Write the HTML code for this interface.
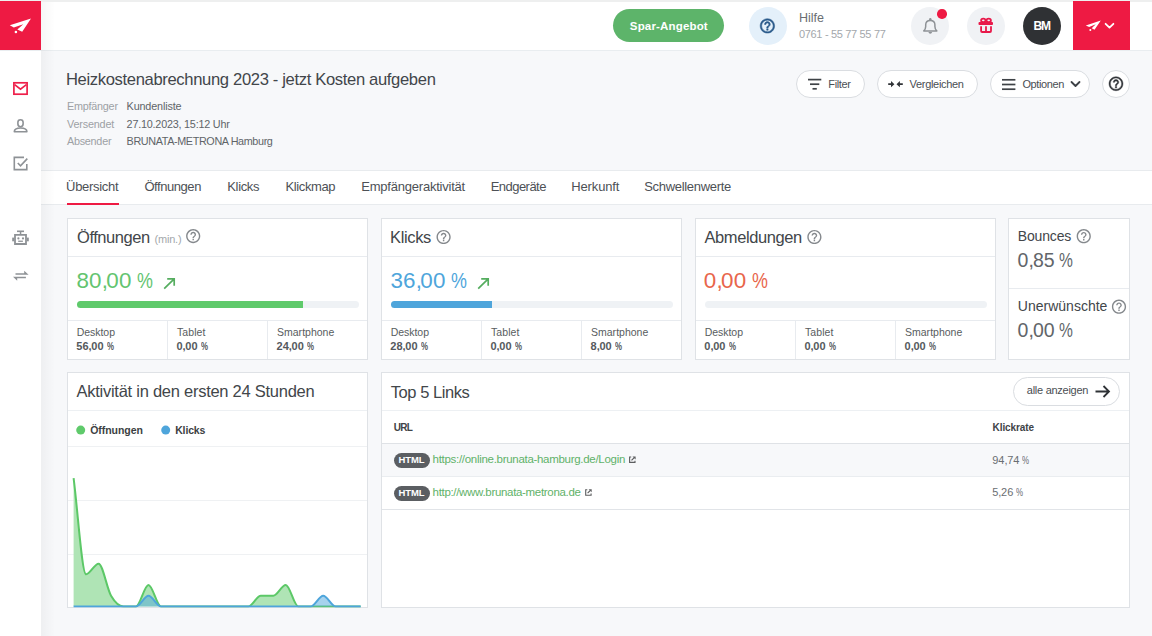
<!DOCTYPE html>
<html><head><meta charset='utf-8'><style>
html,body{margin:0;padding:0;width:1152px;height:636px;overflow:hidden;background:#f7f8fa;font-family:"Liberation Sans", sans-serif;}
.b{position:absolute;}
.t{position:absolute;white-space:nowrap;line-height:1.117;}
.ov{position:absolute;left:0;top:0;}
</style></head><body>
<div class=b style='left:0px;top:0px;width:1152px;height:2px;background:#eeefef'></div><div class=b style='left:0px;top:2px;width:1152px;height:48px;background:#fff'></div><div class=b style='left:0px;top:50px;width:1152px;height:1px;background:#e9edf0'></div><div class=b style='left:41px;top:51px;width:1111px;height:585px;background:#f7f8fa'></div><div class=b style='left:0px;top:51px;width:41px;height:585px;background:#fff'></div><div class=b style='left:0px;top:1.4px;width:41px;height:48.6px;background:#ee1a43'></div><div class=b style='left:41px;top:170px;width:1111px;height:35px;background:#fff;border-top:1px solid #e8ebee;border-bottom:1px solid #e8ebee;box-sizing:border-box'></div><div class=b style='left:67px;top:203px;width:52px;height:2px;background:#ee1a43'></div><div class=b style='left:613px;top:9px;width:111px;height:33px;background:#5db46a;border-radius:17px'></div><div class=b style='left:749px;top:7px;width:38px;height:38px;background:#e4f0fa;border-radius:50%'></div><div class=b style='left:911px;top:7px;width:38px;height:38px;background:#f0f2f5;border-radius:50%'></div><div class=b style='left:937px;top:9px;width:9.5px;height:9.5px;background:#ee1a43;border-radius:50%'></div><div class=b style='left:967px;top:7px;width:38px;height:38px;background:#f0f2f5;border-radius:50%'></div><div class=b style='left:1023px;top:7px;width:38px;height:38px;background:#2f3134;border-radius:50%'></div><div class=b style='left:1073px;top:1.3px;width:57px;height:48.7px;background:#ee1a43'></div><div class=b style='left:796px;top:70px;width:69px;height:28px;background:#fff;border:1px solid #dadde1;border-radius:14px;box-sizing:border-box'></div><div class=b style='left:877px;top:70px;width:101px;height:28px;background:#fff;border:1px solid #dadde1;border-radius:14px;box-sizing:border-box'></div><div class=b style='left:990px;top:70px;width:100px;height:28px;background:#fff;border:1px solid #dadde1;border-radius:14px;box-sizing:border-box'></div><div class=b style='left:1102px;top:70px;width:28px;height:28px;background:#fff;border:1px solid #dadde1;border-radius:50%;box-sizing:border-box'></div><div class=b style='left:67px;top:218px;width:301px;height:142px;background:#fff;border:1px solid #dfe2e6;box-sizing:border-box'></div><div class=b style='left:68px;top:256px;width:299px;height:1px;background:#e8ebef'></div><div class=b style='left:68px;top:320px;width:299px;height:1px;background:#e8ebef'></div><div class=b style='left:167px;top:321px;width:1px;height:38px;background:#e8ebef'></div><div class=b style='left:267px;top:321px;width:1px;height:38px;background:#e8ebef'></div><div class=b style='left:76.5px;top:301px;width:282px;height:7px;background:#eff2f5;border-radius:4px'></div><div class=b style='left:381px;top:218px;width:301px;height:142px;background:#fff;border:1px solid #dfe2e6;box-sizing:border-box'></div><div class=b style='left:382px;top:256px;width:299px;height:1px;background:#e8ebef'></div><div class=b style='left:382px;top:320px;width:299px;height:1px;background:#e8ebef'></div><div class=b style='left:481px;top:321px;width:1px;height:38px;background:#e8ebef'></div><div class=b style='left:581px;top:321px;width:1px;height:38px;background:#e8ebef'></div><div class=b style='left:390.5px;top:301px;width:282px;height:7px;background:#eff2f5;border-radius:4px'></div><div class=b style='left:695px;top:218px;width:301px;height:142px;background:#fff;border:1px solid #dfe2e6;box-sizing:border-box'></div><div class=b style='left:696px;top:256px;width:299px;height:1px;background:#e8ebef'></div><div class=b style='left:696px;top:320px;width:299px;height:1px;background:#e8ebef'></div><div class=b style='left:795px;top:321px;width:1px;height:38px;background:#e8ebef'></div><div class=b style='left:895px;top:321px;width:1px;height:38px;background:#e8ebef'></div><div class=b style='left:704.5px;top:301px;width:282px;height:7px;background:#eff2f5;border-radius:4px'></div><div class=b style='left:76.5px;top:301px;width:226px;height:7px;background:#5fca6b;border-radius:4px 0 0 4px'></div><div class=b style='left:390.5px;top:301px;width:101.5px;height:7px;background:#4ea5db;border-radius:4px 0 0 4px'></div><div class=b style='left:1008px;top:218px;width:122px;height:142px;background:#fff;border:1px solid #dfe2e6;box-sizing:border-box'></div><div class=b style='left:1009px;top:288px;width:120px;height:1px;background:#e8ebef'></div><div class=b style='left:67px;top:372px;width:301px;height:236px;background:#fff;border:1px solid #dfe2e6;box-sizing:border-box'></div><div class=b style='left:68px;top:410px;width:299px;height:1px;background:#edf0f3'></div><div class=b style='left:381px;top:372px;width:749px;height:236px;background:#fff;border:1px solid #dfe2e6;box-sizing:border-box'></div><div class=b style='left:382px;top:410px;width:747px;height:1px;background:#edf0f3'></div><div class=b style='left:382px;top:443px;width:747px;height:1px;background:#dfe2e6'></div><div class=b style='left:382px;top:444px;width:747px;height:32px;background:#f7f8fa'></div><div class=b style='left:382px;top:476px;width:747px;height:1px;background:#eaedf0'></div><div class=b style='left:382px;top:509px;width:747px;height:1px;background:#e1e4e8'></div><div class=b style='left:1013px;top:377px;width:107px;height:29px;background:#fff;border:1px solid #dadde1;border-radius:14.5px;box-sizing:border-box'></div><div class=b style='left:393.5px;top:453px;width:36px;height:14.5px;background:#5b5e62;border-radius:7.5px'></div><div class=b style='left:393.5px;top:486px;width:36px;height:14.5px;background:#5b5e62;border-radius:7.5px'></div><div class=b style='left:41px;top:2px;width:14px;height:634px;background:linear-gradient(90deg,rgba(0,0,0,0.035),rgba(0,0,0,0))'></div>
<svg class=ov width='1152' height='636' viewBox='0 0 1152 636'>
<clipPath id=cc><rect x='68' y='440' width='299' height='167.5'/></clipPath>
<g stroke='#eff1f3' stroke-width='1'>
<line x1='68' y1='446.5' x2='367' y2='446.5'/><line x1='68' y1='500.5' x2='367' y2='500.5'/><line x1='68' y1='554.5' x2='367' y2='554.5'/>
</g>
<g clip-path='url(#cc)'>
<path d='M73.60 478.12 C77.76 510.19 81.92 574.33 86.08 574.33 C90.24 574.33 94.40 563.64 98.56 563.64 C102.72 563.64 106.88 588.58 111.04 595.71 C115.20 602.84 119.36 606.40 123.52 606.40 C127.68 606.40 131.84 606.40 136.00 606.40 C140.16 606.40 144.32 585.02 148.48 585.02 C152.64 585.02 156.80 606.40 160.96 606.40 C165.12 606.40 169.28 606.40 173.44 606.40 C177.60 606.40 181.76 606.40 185.92 606.40 C190.08 606.40 194.24 606.40 198.40 606.40 C202.56 606.40 206.72 606.40 210.88 606.40 C215.04 606.40 219.20 606.40 223.36 606.40 C227.52 606.40 231.68 606.40 235.84 606.40 C240.00 606.40 244.16 606.40 248.32 606.40 C252.48 606.40 256.64 595.71 260.80 595.71 C264.96 595.71 269.12 595.71 273.28 595.71 C277.44 595.71 281.60 585.02 285.76 585.02 C289.92 585.02 294.08 606.40 298.24 606.40 C302.40 606.40 306.56 606.40 310.72 606.40 C314.88 606.40 319.04 606.40 323.20 606.40 C327.36 606.40 331.52 606.40 335.68 606.40 C339.84 606.40 344.00 606.40 348.16 606.40 C352.32 606.40 356.48 606.40 360.64 606.40 L360.64 606.4 L73.6 606.4 Z' fill='#afe4b5'/>
<path d='M73.60 478.12 C77.76 510.19 81.92 574.33 86.08 574.33 C90.24 574.33 94.40 563.64 98.56 563.64 C102.72 563.64 106.88 588.58 111.04 595.71 C115.20 602.84 119.36 606.40 123.52 606.40 C127.68 606.40 131.84 606.40 136.00 606.40 C140.16 606.40 144.32 585.02 148.48 585.02 C152.64 585.02 156.80 606.40 160.96 606.40 C165.12 606.40 169.28 606.40 173.44 606.40 C177.60 606.40 181.76 606.40 185.92 606.40 C190.08 606.40 194.24 606.40 198.40 606.40 C202.56 606.40 206.72 606.40 210.88 606.40 C215.04 606.40 219.20 606.40 223.36 606.40 C227.52 606.40 231.68 606.40 235.84 606.40 C240.00 606.40 244.16 606.40 248.32 606.40 C252.48 606.40 256.64 595.71 260.80 595.71 C264.96 595.71 269.12 595.71 273.28 595.71 C277.44 595.71 281.60 585.02 285.76 585.02 C289.92 585.02 294.08 606.40 298.24 606.40 C302.40 606.40 306.56 606.40 310.72 606.40 C314.88 606.40 319.04 606.40 323.20 606.40 C327.36 606.40 331.52 606.40 335.68 606.40 C339.84 606.40 344.00 606.40 348.16 606.40 C352.32 606.40 356.48 606.40 360.64 606.40' fill='none' stroke='#5cc867' stroke-width='2'/>
<path d='M73.60 606.40 C77.76 606.40 81.92 606.40 86.08 606.40 C90.24 606.40 94.40 606.40 98.56 606.40 C102.72 606.40 106.88 606.40 111.04 606.40 C115.20 606.40 119.36 606.40 123.52 606.40 C127.68 606.40 131.84 606.40 136.00 606.40 C140.16 606.40 144.32 595.71 148.48 595.71 C152.64 595.71 156.80 606.40 160.96 606.40 C165.12 606.40 169.28 606.40 173.44 606.40 C177.60 606.40 181.76 606.40 185.92 606.40 C190.08 606.40 194.24 606.40 198.40 606.40 C202.56 606.40 206.72 606.40 210.88 606.40 C215.04 606.40 219.20 606.40 223.36 606.40 C227.52 606.40 231.68 606.40 235.84 606.40 C240.00 606.40 244.16 606.40 248.32 606.40 C252.48 606.40 256.64 606.40 260.80 606.40 C264.96 606.40 269.12 606.40 273.28 606.40 C277.44 606.40 281.60 606.40 285.76 606.40 C289.92 606.40 294.08 606.40 298.24 606.40 C302.40 606.40 306.56 606.40 310.72 606.40 C314.88 606.40 319.04 595.71 323.20 595.71 C327.36 595.71 331.52 606.40 335.68 606.40 C339.84 606.40 344.00 606.40 348.16 606.40 C352.32 606.40 356.48 606.40 360.64 606.40 L360.64 606.4 L73.6 606.4 Z' fill='rgba(78,165,219,0.5)'/>
<path d='M73.60 606.40 C77.76 606.40 81.92 606.40 86.08 606.40 C90.24 606.40 94.40 606.40 98.56 606.40 C102.72 606.40 106.88 606.40 111.04 606.40 C115.20 606.40 119.36 606.40 123.52 606.40 C127.68 606.40 131.84 606.40 136.00 606.40 C140.16 606.40 144.32 595.71 148.48 595.71 C152.64 595.71 156.80 606.40 160.96 606.40 C165.12 606.40 169.28 606.40 173.44 606.40 C177.60 606.40 181.76 606.40 185.92 606.40 C190.08 606.40 194.24 606.40 198.40 606.40 C202.56 606.40 206.72 606.40 210.88 606.40 C215.04 606.40 219.20 606.40 223.36 606.40 C227.52 606.40 231.68 606.40 235.84 606.40 C240.00 606.40 244.16 606.40 248.32 606.40 C252.48 606.40 256.64 606.40 260.80 606.40 C264.96 606.40 269.12 606.40 273.28 606.40 C277.44 606.40 281.60 606.40 285.76 606.40 C289.92 606.40 294.08 606.40 298.24 606.40 C302.40 606.40 306.56 606.40 310.72 606.40 C314.88 606.40 319.04 595.71 323.20 595.71 C327.36 595.71 331.52 606.40 335.68 606.40 C339.84 606.40 344.00 606.40 348.16 606.40 C352.32 606.40 356.48 606.40 360.64 606.40' fill='none' stroke='#4ea5db' stroke-width='2'/>
</g>
<circle cx='80.7' cy='430.1' r='4.5' fill='#5fca6b'/>
<circle cx='165.7' cy='430.1' r='4.5' fill='#4ea5db'/>
<path d='M9.8 25.2 L31 18.6 L22.2 31.8 L17.3 29.4 L23.3 24.2 L13.8 27.6 Z' fill='#fff'/><circle cx='15.9' cy='32' r='1.3' fill='#fff'/><path d='M1085.8 25.4 L1100.8 20.4 L1094.5 29.8 L1091.7 28.2 L1095.8 24.2 L1089.2 26.9 Z' fill='#fff'/><circle cx='1090.3' cy='29.9' r='1' fill='#fff'/><path d='M1105.6 23.8 L1109.5 27.6 L1113.4 23.8' fill='none' stroke='#fff' stroke-width='1.8' stroke-linecap='round' stroke-linejoin='round'/><path transform='translate(758.760 17.260) scale(0.7200)' stroke='#29598a' stroke-width='0.7' fill='#29598a' d='M11 18h2v-2h-2v2zm1-16C6.48 2 2 6.48 2 12s4.48 10 10 10 10-4.48 10-10S17.52 2 12 2zm0 18c-4.41 0-8-3.59-8-8s3.59-8 8-8 8 3.59 8 8-3.59 8-8 8zm0-14c-2.21 0-4 1.79-4 4h2c0-1.1.9-2 2-2s2 .9 2 2c0 2-3 1.75-3 5h2c0-2.25 3-2.5 3-5 0-2.21-1.79-4-4-4z'/><path d='M923.8 30.9 Q925.7 29.2 925.7 26.6 V24.8 Q925.7 20.4 930.3 20.4 Q934.9 20.4 934.9 24.8 V26.6 Q934.9 29.2 936.8 30.9 Z' fill='none' stroke='#8e9296' stroke-width='1.5' stroke-linejoin='round'/><circle cx='930.3' cy='19.3' r='1.2' fill='#8e9296'/><path d='M928.4 32.1 H932.2 Q931.8 33.8 930.3 33.8 Q928.8 33.8 928.4 32.1 Z' fill='#8e9296'/><g fill='none' stroke='#e8194a' stroke-width='1.8'><ellipse cx='983.3' cy='20.4' rx='2.2' ry='1.7'/><ellipse cx='988.7' cy='20.4' rx='2.2' ry='1.7'/><path d='M981.1 26.2 V31 Q981.1 32 982.1 32 H990 Q991 32 991 31 V26.2 M986 26.2 V32'/></g><rect x='978.5' y='22' width='14.5' height='3' rx='0.9' fill='#e8194a'/><g stroke='#3e4246' stroke-width='1.7'><line x1='808' y1='79.6' x2='821.3' y2='79.6'/><line x1='810' y1='84.2' x2='819.3' y2='84.2'/><line x1='812.5' y1='88.8' x2='816.8' y2='88.8'/></g><g fill='#303337'><path d='M888.2 83.3 H891.5 V85.1 H888.2 Z M891 81.1 L894.4 84.2 L891 87.3 Z M902.8 83.3 H899.5 V85.1 H902.8 Z M899.9 81.1 L896.5 84.2 L899.9 87.3 Z'/></g><g stroke='#3e4246' stroke-width='1.7'><line x1='1002' y1='79.8' x2='1015.4' y2='79.8'/><line x1='1002' y1='84.5' x2='1015.4' y2='84.5'/><line x1='1002' y1='89.2' x2='1015.4' y2='89.2'/></g><path d='M1071.5 82 L1075.5 86 L1079.5 82' fill='none' stroke='#3e4246' stroke-width='1.8' stroke-linecap='round' stroke-linejoin='round'/><path transform='translate(1107.600 75.300) scale(0.7000)' stroke='#303337' stroke-width='0.6' fill='#303337' d='M11 18h2v-2h-2v2zm1-16C6.48 2 2 6.48 2 12s4.48 10 10 10 10-4.48 10-10S17.52 2 12 2zm0 18c-4.41 0-8-3.59-8-8s3.59-8 8-8 8 3.59 8 8-3.59 8-8 8zm0-14c-2.21 0-4 1.79-4 4h2c0-1.1.9-2 2-2s2 .9 2 2c0 2-3 1.75-3 5h2c0-2.25 3-2.5 3-5 0-2.21-1.79-4-4-4z'/><path transform='translate(184.680 227.580) scale(0.7100)' fill='#85898d' d='M11 18h2v-2h-2v2zm1-16C6.48 2 2 6.48 2 12s4.48 10 10 10 10-4.48 10-10S17.52 2 12 2zm0 18c-4.41 0-8-3.59-8-8s3.59-8 8-8 8 3.59 8 8-3.59 8-8 8zm0-14c-2.21 0-4 1.79-4 4h2c0-1.1.9-2 2-2s2 .9 2 2c0 2-3 1.75-3 5h2c0-2.25 3-2.5 3-5 0-2.21-1.79-4-4-4z'/><path transform='translate(435.080 228.480) scale(0.7100)' fill='#85898d' d='M11 18h2v-2h-2v2zm1-16C6.48 2 2 6.48 2 12s4.48 10 10 10 10-4.48 10-10S17.52 2 12 2zm0 18c-4.41 0-8-3.59-8-8s3.59-8 8-8 8 3.59 8 8-3.59 8-8 8zm0-14c-2.21 0-4 1.79-4 4h2c0-1.1.9-2 2-2s2 .9 2 2c0 2-3 1.75-3 5h2c0-2.25 3-2.5 3-5 0-2.21-1.79-4-4-4z'/><path transform='translate(805.880 228.480) scale(0.7100)' fill='#85898d' d='M11 18h2v-2h-2v2zm1-16C6.48 2 2 6.48 2 12s4.48 10 10 10 10-4.48 10-10S17.52 2 12 2zm0 18c-4.41 0-8-3.59-8-8s3.59-8 8-8 8 3.59 8 8-3.59 8-8 8zm0-14c-2.21 0-4 1.79-4 4h2c0-1.1.9-2 2-2s2 .9 2 2c0 2-3 1.75-3 5h2c0-2.25 3-2.5 3-5 0-2.21-1.79-4-4-4z'/><path transform='translate(1075.230 227.680) scale(0.7100)' fill='#85898d' d='M11 18h2v-2h-2v2zm1-16C6.48 2 2 6.48 2 12s4.48 10 10 10 10-4.48 10-10S17.52 2 12 2zm0 18c-4.41 0-8-3.59-8-8s3.59-8 8-8 8 3.59 8 8-3.59 8-8 8zm0-14c-2.21 0-4 1.79-4 4h2c0-1.1.9-2 2-2s2 .9 2 2c0 2-3 1.75-3 5h2c0-2.25 3-2.5 3-5 0-2.21-1.79-4-4-4z'/><path transform='translate(1110.480 298.180) scale(0.7100)' fill='#85898d' d='M11 18h2v-2h-2v2zm1-16C6.48 2 2 6.48 2 12s4.48 10 10 10 10-4.48 10-10S17.52 2 12 2zm0 18c-4.41 0-8-3.59-8-8s3.59-8 8-8 8 3.59 8 8-3.59 8-8 8zm0-14c-2.21 0-4 1.79-4 4h2c0-1.1.9-2 2-2s2 .9 2 2c0 2-3 1.75-3 5h2c0-2.25 3-2.5 3-5 0-2.21-1.79-4-4-4z'/><path d='M164.2 288.6 L174.2 278.8 M167.2 278.8 L174.2 278.8 L174.2 285.8' fill='none' stroke='#55ad5f' stroke-width='1.7'/><path d='M478.2 288.6 L488.2 278.8 M481.2 278.8 L488.2 278.8 L488.2 285.8' fill='none' stroke='#55ad5f' stroke-width='1.7'/><path d='M1095.5 391.5 L1109 391.5 M1103.5 386 L1109 391.5 L1103.5 397' fill='none' stroke='#2f3236' stroke-width='1.8'/><path d='M631.20 457.00 H629.60 V462.40 H635.00 V460.70' fill='none' stroke='#5c5d5f' stroke-width='1.1'/><path d='M631.50 460.40 L634.30 457.60' stroke='#5c5d5f' stroke-width='1.2'/><path d='M632.50 456.40 H635.60 V459.50 Z' fill='#5c5d5f'/><path d='M587.30 489.80 H585.70 V495.20 H591.10 V493.50' fill='none' stroke='#5c5d5f' stroke-width='1.1'/><path d='M587.60 493.20 L590.40 490.40' stroke='#5c5d5f' stroke-width='1.2'/><path d='M588.60 489.20 H591.70 V492.30 Z' fill='#5c5d5f'/><rect x='13.9' y='82.8' width='13.2' height='11.4' fill='none' stroke='#ee1f4a' stroke-width='1.7'/><path d='M14.6 84.6 L20.5 89.2 L26.4 84.6' fill='none' stroke='#ee1f4a' stroke-width='1.7'/><rect x='17.9' y='119.7' width='5.2' height='7' rx='2.6' fill='none' stroke='#8e9296' stroke-width='1.6'/><path d='M14.3 131.7 Q14.3 128 20.6 128 Q26.9 128 26.9 131.7 Z' fill='none' stroke='#8e9296' stroke-width='1.6' stroke-linejoin='round'/><path d='M24 157.4 L14.3 157.4 L14.3 169.6 L26.8 169.6 L26.8 164' fill='none' stroke='#8e9296' stroke-width='1.6'/><path d='M17.8 163 L20.5 165.8 L27.3 158.6' fill='none' stroke='#8e9296' stroke-width='1.6'/><g fill='#8e9296'><rect x='17' y='230.5' width='7' height='1.6'/><rect x='19.8' y='231.5' width='1.5' height='2.8'/><path d='M14.1 234 H26.9 V244.9 H14.1 Z M15.9 235.8 V243.1 H25.1 V235.8 Z' fill-rule='evenodd'/><rect x='12.2' y='237.6' width='1.9' height='3.7'/><rect x='26.9' y='237.6' width='1.9' height='3.7'/><circle cx='18.4' cy='238.4' r='1.1'/><circle cx='23' cy='238.4' r='1.1'/><rect x='18.2' y='240.6' width='4.7' height='1.3'/></g><g fill='#8e9296'><path d='M15.5 273.3 H24.2 V270.7 L28.6 274.8 H15.5 Z'/><path d='M25.9 276.7 H13 L17.2 280.7 V278.2 H25.9 Z'/></g></svg>
<div class=t style='left:629.80px;top:19.59px;font-size:11.5px;color:#fff;font-weight:700;letter-spacing:0.170px;'>Spar-Angebot</div>
<div class=t style='left:799.00px;top:12.19px;font-size:12.5px;color:#6a6e72;font-weight:400;letter-spacing:-0.004px;'>Hilfe</div>
<div class=t style='left:799.00px;top:28.25px;font-size:11px;color:#a3a7ab;font-weight:400;letter-spacing:-0.327px;'>0761 - 55 77 55 77</div>
<div class=t style='left:1033.50px;top:19.54px;font-size:12px;color:#fff;font-weight:700;letter-spacing:-1.072px;'>BM</div>
<div class=t style='left:65.90px;top:70.98px;font-size:16.6px;color:#42464a;font-weight:400;letter-spacing:-0.345px;'>Heizkostenabrechnung 2023 - jetzt Kosten aufgeben</div>
<div class=t style='left:67.00px;top:100.23px;font-size:10.8px;color:#9da1a5;font-weight:400;letter-spacing:-0.229px;'>Empfänger</div>
<div class=t style='left:126.60px;top:100.23px;font-size:10.8px;color:#606468;font-weight:400;letter-spacing:-0.144px;'>Kundenliste</div>
<div class=t style='left:67.00px;top:117.73px;font-size:10.8px;color:#9da1a5;font-weight:400;letter-spacing:-0.166px;'>Versendet</div>
<div class=t style='left:126.60px;top:117.73px;font-size:10.8px;color:#606468;font-weight:400;letter-spacing:-0.213px;'>27.10.2023, 15:12 Uhr</div>
<div class=t style='left:67.00px;top:135.13px;font-size:10.8px;color:#9da1a5;font-weight:400;letter-spacing:-0.248px;'>Absender</div>
<div class=t style='left:126.60px;top:135.13px;font-size:10.8px;color:#606468;font-weight:400;letter-spacing:-0.368px;'>BRUNATA-METRONA Hamburg</div>
<div class=t style='left:828.30px;top:77.64px;font-size:11px;color:#4a4e53;font-weight:400;letter-spacing:-0.351px;'>Filter</div>
<div class=t style='left:909.60px;top:77.64px;font-size:11px;color:#4a4e53;font-weight:400;letter-spacing:-0.310px;'>Vergleichen</div>
<div class=t style='left:1022.40px;top:77.64px;font-size:11px;color:#4a4e53;font-weight:400;letter-spacing:-0.394px;'>Optionen</div>
<div class=t style='left:66.10px;top:180.04px;font-size:13px;color:#4d5156;font-weight:400;letter-spacing:-0.303px;'>Übersicht</div>
<div class=t style='left:144.40px;top:180.04px;font-size:13px;color:#4d5156;font-weight:400;letter-spacing:-0.436px;'>Öffnungen</div>
<div class=t style='left:227.30px;top:180.04px;font-size:13px;color:#4d5156;font-weight:400;letter-spacing:-0.351px;'>Klicks</div>
<div class=t style='left:285.40px;top:180.04px;font-size:13px;color:#4d5156;font-weight:400;letter-spacing:-0.364px;'>Klickmap</div>
<div class=t style='left:361.30px;top:180.04px;font-size:13px;color:#4d5156;font-weight:400;letter-spacing:-0.222px;'>Empfängeraktivität</div>
<div class=t style='left:490.70px;top:180.04px;font-size:13px;color:#4d5156;font-weight:400;letter-spacing:-0.537px;'>Endgeräte</div>
<div class=t style='left:571.30px;top:180.04px;font-size:13px;color:#4d5156;font-weight:400;letter-spacing:-0.149px;'>Herkunft</div>
<div class=t style='left:644.20px;top:180.04px;font-size:13px;color:#4d5156;font-weight:400;letter-spacing:-0.304px;'>Schwellenwerte</div>
<div class=t style='left:77.00px;top:227.67px;font-size:16.5px;color:#42464a;font-weight:400;letter-spacing:-0.446px;'>Öffnungen</div>
<div class=t style='left:154.50px;top:232.64px;font-size:11px;color:#a3a7ab;font-weight:400;letter-spacing:-0.202px;'>(min.)</div>
<div class=t style='left:390.00px;top:227.87px;font-size:16.5px;color:#42464a;font-weight:400;letter-spacing:-0.359px;'>Klicks</div>
<div class=t style='left:704.50px;top:227.87px;font-size:16.5px;color:#42464a;font-weight:400;letter-spacing:-0.423px;'>Abmeldungen</div>
<div class=t style='left:76.40px;top:268.33px;font-size:22.4px;color:#63c46f;font-weight:400;letter-spacing:0.000px;letter-spacing:0.25px'>80<span style='letter-spacing:-1.79px'>,</span>00<span style='letter-spacing:-0.45px'> </span><span style='display:inline-block;transform:scaleX(0.8);transform-origin:0 0'>%</span></div>
<div class=t style='left:390.40px;top:268.33px;font-size:22.4px;color:#4ea5db;font-weight:400;letter-spacing:0.000px;letter-spacing:0.25px'>36<span style='letter-spacing:-1.79px'>,</span>00<span style='letter-spacing:-0.45px'> </span><span style='display:inline-block;transform:scaleX(0.8);transform-origin:0 0'>%</span></div>
<div class=t style='left:703.80px;top:268.33px;font-size:22.4px;color:#e8654b;font-weight:400;letter-spacing:0.000px;letter-spacing:0.25px'>0<span style='letter-spacing:-1.79px'>,</span>00<span style='letter-spacing:-0.45px'> </span><span style='display:inline-block;transform:scaleX(0.8);transform-origin:0 0'>%</span></div>
<div class=t style='left:76.80px;top:327.00px;font-size:10.5px;color:#585c60;font-weight:400;letter-spacing:-0.055px;'>Desktop</div>
<div class=t style='left:76.36px;top:340.05px;font-size:11px;color:#55595d;font-weight:700;letter-spacing:0.000px;letter-spacing:0px'>56<span style='letter-spacing:-0.33px'>,</span>00<span style='letter-spacing:0.00px'> </span><span style='display:inline-block;transform:scaleX(0.72);transform-origin:0 0'>%</span></div>
<div class=t style='left:176.90px;top:327.00px;font-size:10.5px;color:#585c60;font-weight:400;letter-spacing:0.114px;'>Tablet</div>
<div class=t style='left:176.46px;top:340.05px;font-size:11px;color:#55595d;font-weight:700;letter-spacing:0.000px;letter-spacing:0px'>0<span style='letter-spacing:-0.33px'>,</span>00<span style='letter-spacing:0.00px'> </span><span style='display:inline-block;transform:scaleX(0.72);transform-origin:0 0'>%</span></div>
<div class=t style='left:277.00px;top:327.00px;font-size:10.5px;color:#585c60;font-weight:400;letter-spacing:0.011px;'>Smartphone</div>
<div class=t style='left:276.56px;top:340.05px;font-size:11px;color:#55595d;font-weight:700;letter-spacing:0.000px;letter-spacing:0px'>24<span style='letter-spacing:-0.33px'>,</span>00<span style='letter-spacing:0.00px'> </span><span style='display:inline-block;transform:scaleX(0.72);transform-origin:0 0'>%</span></div>
<div class=t style='left:390.80px;top:327.00px;font-size:10.5px;color:#585c60;font-weight:400;letter-spacing:-0.055px;'>Desktop</div>
<div class=t style='left:390.36px;top:340.05px;font-size:11px;color:#55595d;font-weight:700;letter-spacing:0.000px;letter-spacing:0px'>28<span style='letter-spacing:-0.33px'>,</span>00<span style='letter-spacing:0.00px'> </span><span style='display:inline-block;transform:scaleX(0.72);transform-origin:0 0'>%</span></div>
<div class=t style='left:490.90px;top:327.00px;font-size:10.5px;color:#585c60;font-weight:400;letter-spacing:0.114px;'>Tablet</div>
<div class=t style='left:490.46px;top:340.05px;font-size:11px;color:#55595d;font-weight:700;letter-spacing:0.000px;letter-spacing:0px'>0<span style='letter-spacing:-0.33px'>,</span>00<span style='letter-spacing:0.00px'> </span><span style='display:inline-block;transform:scaleX(0.72);transform-origin:0 0'>%</span></div>
<div class=t style='left:591.00px;top:327.00px;font-size:10.5px;color:#585c60;font-weight:400;letter-spacing:0.011px;'>Smartphone</div>
<div class=t style='left:590.56px;top:340.05px;font-size:11px;color:#55595d;font-weight:700;letter-spacing:0.000px;letter-spacing:0px'>8<span style='letter-spacing:-0.33px'>,</span>00<span style='letter-spacing:0.00px'> </span><span style='display:inline-block;transform:scaleX(0.72);transform-origin:0 0'>%</span></div>
<div class=t style='left:704.80px;top:327.00px;font-size:10.5px;color:#585c60;font-weight:400;letter-spacing:-0.055px;'>Desktop</div>
<div class=t style='left:704.36px;top:340.05px;font-size:11px;color:#55595d;font-weight:700;letter-spacing:0.000px;letter-spacing:0px'>0<span style='letter-spacing:-0.33px'>,</span>00<span style='letter-spacing:0.00px'> </span><span style='display:inline-block;transform:scaleX(0.72);transform-origin:0 0'>%</span></div>
<div class=t style='left:804.90px;top:327.00px;font-size:10.5px;color:#585c60;font-weight:400;letter-spacing:0.114px;'>Tablet</div>
<div class=t style='left:804.46px;top:340.05px;font-size:11px;color:#55595d;font-weight:700;letter-spacing:0.000px;letter-spacing:0px'>0<span style='letter-spacing:-0.33px'>,</span>00<span style='letter-spacing:0.00px'> </span><span style='display:inline-block;transform:scaleX(0.72);transform-origin:0 0'>%</span></div>
<div class=t style='left:905.00px;top:327.00px;font-size:10.5px;color:#585c60;font-weight:400;letter-spacing:0.011px;'>Smartphone</div>
<div class=t style='left:904.56px;top:340.05px;font-size:11px;color:#55595d;font-weight:700;letter-spacing:0.000px;letter-spacing:0px'>0<span style='letter-spacing:-0.33px'>,</span>00<span style='letter-spacing:0.00px'> </span><span style='display:inline-block;transform:scaleX(0.72);transform-origin:0 0'>%</span></div>
<div class=t style='left:1017.80px;top:228.93px;font-size:14px;color:#42464a;font-weight:400;letter-spacing:-0.164px;'>Bounces</div>
<div class=t style='left:1017.52px;top:249.75px;font-size:19.5px;color:#62666a;font-weight:400;letter-spacing:0.000px;letter-spacing:0px'>0<span style='letter-spacing:-0.78px'>,</span>85<span style='letter-spacing:-0.88px'> </span><span style='display:inline-block;transform:scaleX(0.8);transform-origin:0 0'>%</span></div>
<div class=t style='left:1017.80px;top:299.13px;font-size:14px;color:#42464a;font-weight:400;letter-spacing:0.009px;'>Unerwünschte</div>
<div class=t style='left:1017.52px;top:319.95px;font-size:19.5px;color:#62666a;font-weight:400;letter-spacing:0.000px;letter-spacing:0px'>0<span style='letter-spacing:-0.78px'>,</span>00<span style='letter-spacing:-0.88px'> </span><span style='display:inline-block;transform:scaleX(0.8);transform-origin:0 0'>%</span></div>
<div class=t style='left:76.50px;top:382.07px;font-size:16.5px;color:#42464a;font-weight:400;letter-spacing:-0.259px;'>Aktivität in den ersten 24 Stunden</div>
<div class=t style='left:90.20px;top:424.50px;font-size:10.5px;color:#3c3f43;font-weight:700;letter-spacing:-0.047px;'>Öffnungen</div>
<div class=t style='left:175.20px;top:424.50px;font-size:10.5px;color:#3c3f43;font-weight:700;letter-spacing:-0.148px;'>Klicks</div>
<div class=t style='left:390.80px;top:383.07px;font-size:16.5px;color:#42464a;font-weight:400;letter-spacing:-0.447px;'>Top 5 Links</div>
<div class=t style='left:1026.80px;top:384.25px;font-size:11px;color:#4a4e53;font-weight:400;letter-spacing:-0.270px;'>alle anzeigen</div>
<div class=t style='left:393.85px;top:421.55px;font-size:10px;color:#404347;font-weight:700;letter-spacing:-0.731px;'>URL</div>
<div class=t style='left:992.60px;top:422.25px;font-size:10px;color:#404347;font-weight:700;letter-spacing:-0.106px;'>Klickrate</div>
<div class=t style='left:432.60px;top:453.29px;font-size:11.5px;color:#5fb269;font-weight:400;letter-spacing:-0.296px;'>https://online.brunata-hamburg.de/Login</div>
<div class=t style='left:432.60px;top:485.99px;font-size:11.5px;color:#5fb269;font-weight:400;letter-spacing:-0.320px;'>http://www.brunata-metrona.de</div>
<div class=t style='left:992.16px;top:453.75px;font-size:11px;color:#6a6e72;font-weight:400;letter-spacing:0.000px;letter-spacing:0px'>94<span style='letter-spacing:-0.33px'>,</span>74<span style='letter-spacing:0.00px'> </span><span style='display:inline-block;transform:scaleX(0.72);transform-origin:0 0'>%</span></div>
<div class=t style='left:992.16px;top:486.44px;font-size:11px;color:#6a6e72;font-weight:400;letter-spacing:0.000px;letter-spacing:0px'>5<span style='letter-spacing:-0.33px'>,</span>26<span style='letter-spacing:0.00px'> </span><span style='display:inline-block;transform:scaleX(0.72);transform-origin:0 0'>%</span></div>
<div class=t style='left:398.50px;top:455.20px;font-size:9.5px;color:#fff;font-weight:700;letter-spacing:-0.130px;'>HTML</div>
<div class=t style='left:398.50px;top:488.00px;font-size:9.5px;color:#fff;font-weight:700;letter-spacing:-0.130px;'>HTML</div>
</body></html>
